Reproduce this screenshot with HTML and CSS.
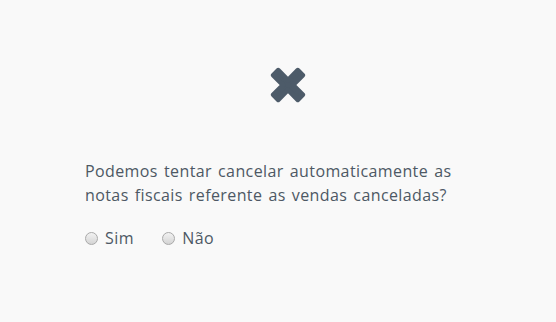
FILE: index.html
```html
<!DOCTYPE html>
<html lang="pt">
<head>
<meta charset="utf-8">
<link rel="stylesheet" href="styles.css">
</head>
<body>
<div class="page">
  <div class="icon-wrap">
    <svg class="icon" width="44" height="44" viewBox="0 0 36 36">
      <path d="M6 10 L10 6 L18 14 L26 6 L30 10 L22 18 L30 26 L26 30 L18 22 L10 30 L6 26 L14 18 Z" fill="#4d5b69" stroke="#4d5b69" stroke-width="4" stroke-linejoin="round"/>
    </svg>
  </div>
  <p class="question">Podemos tentar cancelar automaticamente as notas fiscais referente as vendas canceladas?</p>
  <div class="options">
    <label class="opt"><span class="radio"></span>Sim</label>
    <label class="opt"><span class="radio"></span>Não</label>
  </div>
</div>
</body>
</html>
```
FILE: styles.css
```css
html, body { margin: 0; padding: 0; }
body { background: #f9f9f9; font-family: "Open Sans", "DejaVu Sans", sans-serif; color: #4d5864; }
.page { width: 556px; height: 322px; padding: 63px 0 0 85px; box-sizing: border-box; }
.icon-wrap { width: 406px; display: flex; justify-content: center; }
.icon { display: block; }
.question { margin: 52px 0 0 0; font-size: 16px; line-height: 24px; width: 385px; letter-spacing: 0.4px; word-spacing: 1.5px; }
.options { display: flex; gap: 28px; margin-top: 20px; font-size: 16px; line-height: 22px; letter-spacing: 0.5px; }
.opt { display: flex; align-items: center; gap: 7px; }
.radio { width: 11px; height: 11px; border-radius: 50%; border: 1px solid #a9a9a9; background: linear-gradient(#f2f2f2, #d4d4d4); display: inline-block; }
```
